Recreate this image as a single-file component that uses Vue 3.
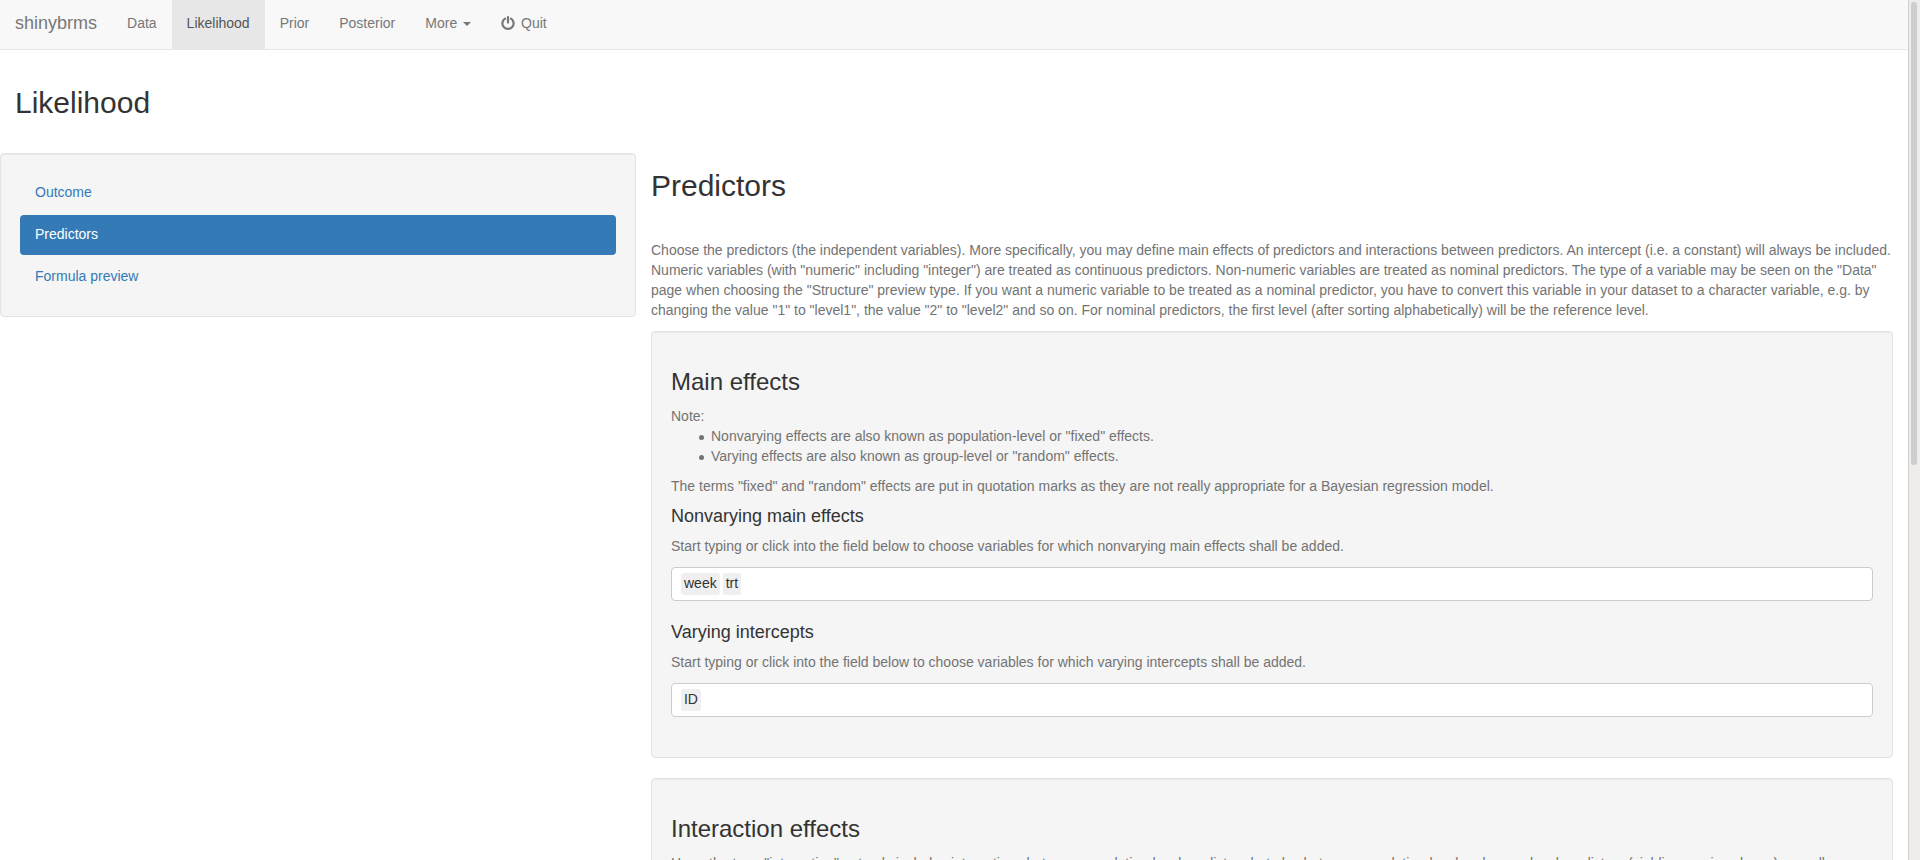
<script setup>
import { reactive } from 'vue'

const tabs = ['Data', 'Likelihood', 'Prior', 'Posterior']
const pills = ['Outcome', 'Predictors', 'Formula preview']

const fields = reactive([
  {
    id: 'nonvarying',
    title: 'Nonvarying main effects',
    help: 'Start typing or click into the field below to choose variables for which nonvarying main effects shall be added.',
    items: ['week', 'trt'],
  },
  {
    id: 'varying',
    title: 'Varying intercepts',
    help: 'Start typing or click into the field below to choose variables for which varying intercepts shall be added.',
    items: ['ID'],
  },
])
</script>

<template>
  <div class="window">
    <div class="page">
      <nav class="navbar">
        <a class="brand" href="#">shinybrms</a>
        <a
          v-for="tab in tabs"
          :key="tab"
          href="#"
          class="tab"
          :class="{ active: tab === 'Likelihood' }"
        >{{ tab }}</a>
        <a href="#" class="tab">More <span class="caret"></span></a>
        <a href="#" class="tab quit">
          <svg class="power" viewBox="0 0 14 14" aria-hidden="true">
            <path d="M4 2.6A5.6 5.6 0 1 0 10 2.6" />
            <path d="M7 1V6.6" />
          </svg>
          Quit
        </a>
      </nav>

      <h2 class="page-title">Likelihood</h2>

      <div class="columns">
        <aside class="well sidebar">
          <a
            v-for="pill in pills"
            :key="pill"
            href="#"
            class="pill"
            :class="{ active: pill === 'Predictors' }"
          >{{ pill }}</a>
        </aside>

        <main class="content">
          <h2>Predictors</h2>
          <p class="intro">
            Choose the predictors (the independent variables). More specifically, you may define main effects of predictors and interactions between predictors. An intercept (i.e. a constant) will always be included. Numeric variables (with "numeric" including "integer") are treated as continuous predictors. Non-numeric variables are treated as nominal predictors. The type of a variable may be seen on the "Data" page when choosing the "Structure" preview type. If you want a numeric variable to be treated as a nominal predictor, you have to convert this variable in your dataset to a character variable, e.g. by changing the value "1" to "level1", the value "2" to "level2" and so on. For nominal predictors, the first level (after sorting alphabetically) will be the reference level.
          </p>

          <section class="well">
            <h3>Main effects</h3>
            <div class="help">
              Note:
              <ul>
                <li>Nonvarying effects are also known as population-level or "fixed" effects.</li>
                <li>Varying effects are also known as group-level or "random" effects.</li>
              </ul>
              The terms "fixed" and "random" effects are put in quotation marks as they are not really appropriate for a Bayesian regression model.
            </div>
            <div v-for="field in fields" :key="field.id" class="field">
              <h4><label :for="field.id">{{ field.title }}</label></h4>
              <p class="help">{{ field.help }}</p>
              <div class="select-box">
                <span v-for="item in field.items" :key="item" class="chip">{{ item }}</span>
                <input :id="field.id" type="text" autocomplete="off" />
              </div>
            </div>
          </section>

          <section class="well">
            <h3>Interaction effects</h3>
            <p class="help">
              Here, the term "interaction" not only includes interactions between population-level predictors but also between population-level and group-level predictors (yielding varying slopes) as well.
            </p>
          </section>
        </main>
      </div>
    </div>
    <div class="scrollbar"><div class="thumb"></div></div>
  </div>
</template>

<style>
body {
  margin: 0;
  overflow: hidden;
  background: #fff;
}
</style>

<style scoped>
.window {
  display: flex;
  height: 100vh;
  overflow: hidden;
  color: #333;
  font: 14px/20px "Liberation Sans", Arial, sans-serif;
}
.window * {
  box-sizing: border-box;
}
.page {
  flex: 1;
  min-width: 0;
  overflow: hidden;
}
a {
  color: #337ab7;
  text-decoration: none;
}
.navbar {
  display: flex;
  height: 50px;
  background: #f8f8f8;
  border-bottom: 1px solid #e7e7e7;
}
.navbar a {
  padding: 13px 15px 16px;
  color: #777;
}
.navbar .brand {
  font-size: 18px;
}
.navbar .active {
  color: #555;
  background: #e7e7e7;
}
.caret {
  display: inline-block;
  margin-left: 2px;
  vertical-align: middle;
  border-top: 4px solid;
  border-right: 4px solid transparent;
  border-left: 4px solid transparent;
}
.navbar .quit {
  display: flex;
  gap: 6px;
}
.power {
  width: 14px;
  height: 14px;
  margin-top: 3px;
  overflow: visible;
  fill: none;
  stroke: currentColor;
  stroke-width: 2.2;
  stroke-linecap: round;
}
h2,
h3,
h4 {
  margin: 0;
  color: #333;
  font-weight: 400;
}
h2 {
  padding-top: 16px;
  font-size: 30px;
  line-height: 33px;
}
h3 {
  padding-top: 18px;
  margin-bottom: 11px;
  font-size: 24px;
  line-height: 26px;
}
h4 {
  margin-bottom: 10px;
  font-size: 18px;
  line-height: 20px;
}
.page-title {
  padding: 36px 15px 0;
  margin-bottom: 34px;
}
.columns {
  display: flex;
  align-items: flex-start;
}
.well {
  padding: 19px;
  margin-bottom: 20px;
  background: #f5f5f5;
  border: 1px solid #e3e3e3;
  border-radius: 4px;
  box-shadow: inset 0 1px 1px rgba(0, 0, 0, 0.05);
}
.sidebar {
  display: flex;
  flex-direction: column;
  gap: 2px;
  width: calc(100% / 3);
}
.pill {
  padding: 9px 15px 11px;
  border-radius: 4px;
}
.pill.active {
  color: #fff;
  background: #337ab7;
}
.content {
  flex: 1;
  min-width: 0;
  padding: 0 15px;
}
.intro {
  margin: 38px 0 11px;
  color: #737373;
}
.help {
  margin: 0 0 10px;
  color: #737373;
}
ul {
  margin: 0 0 10px;
  padding-left: 28px;
  list-style: none;
}
li {
  display: flex;
  gap: 7px;
}
li::before {
  content: "";
  flex: none;
  width: 5px;
  height: 5px;
  margin-top: 9px;
  background: currentColor;
  border-radius: 50%;
}
.field {
  margin-bottom: 21px;
}
.field .help {
  margin-bottom: 11px;
}
.select-box {
  display: flex;
  gap: 3px;
  height: 34px;
  padding: 5px 9px;
  background: #fff;
  border: 1px solid #ccc;
  border-radius: 4px;
}
.chip {
  padding: 0 3px 2px;
  background: #efefef;
  border-radius: 3px;
}
.select-box input {
  flex: 1;
  min-width: 0;
  padding: 0;
  border: 0;
  outline: 0;
  background: transparent;
  font: inherit;
}
.scrollbar {
  width: 12px;
  padding: 2px 3px 0 2px;
  background: #efedeb;
  border-left: 1px solid #d0cdca;
}
.thumb {
  height: 54%;
  background: #cecece;
  border-radius: 3px;
}
</style>
